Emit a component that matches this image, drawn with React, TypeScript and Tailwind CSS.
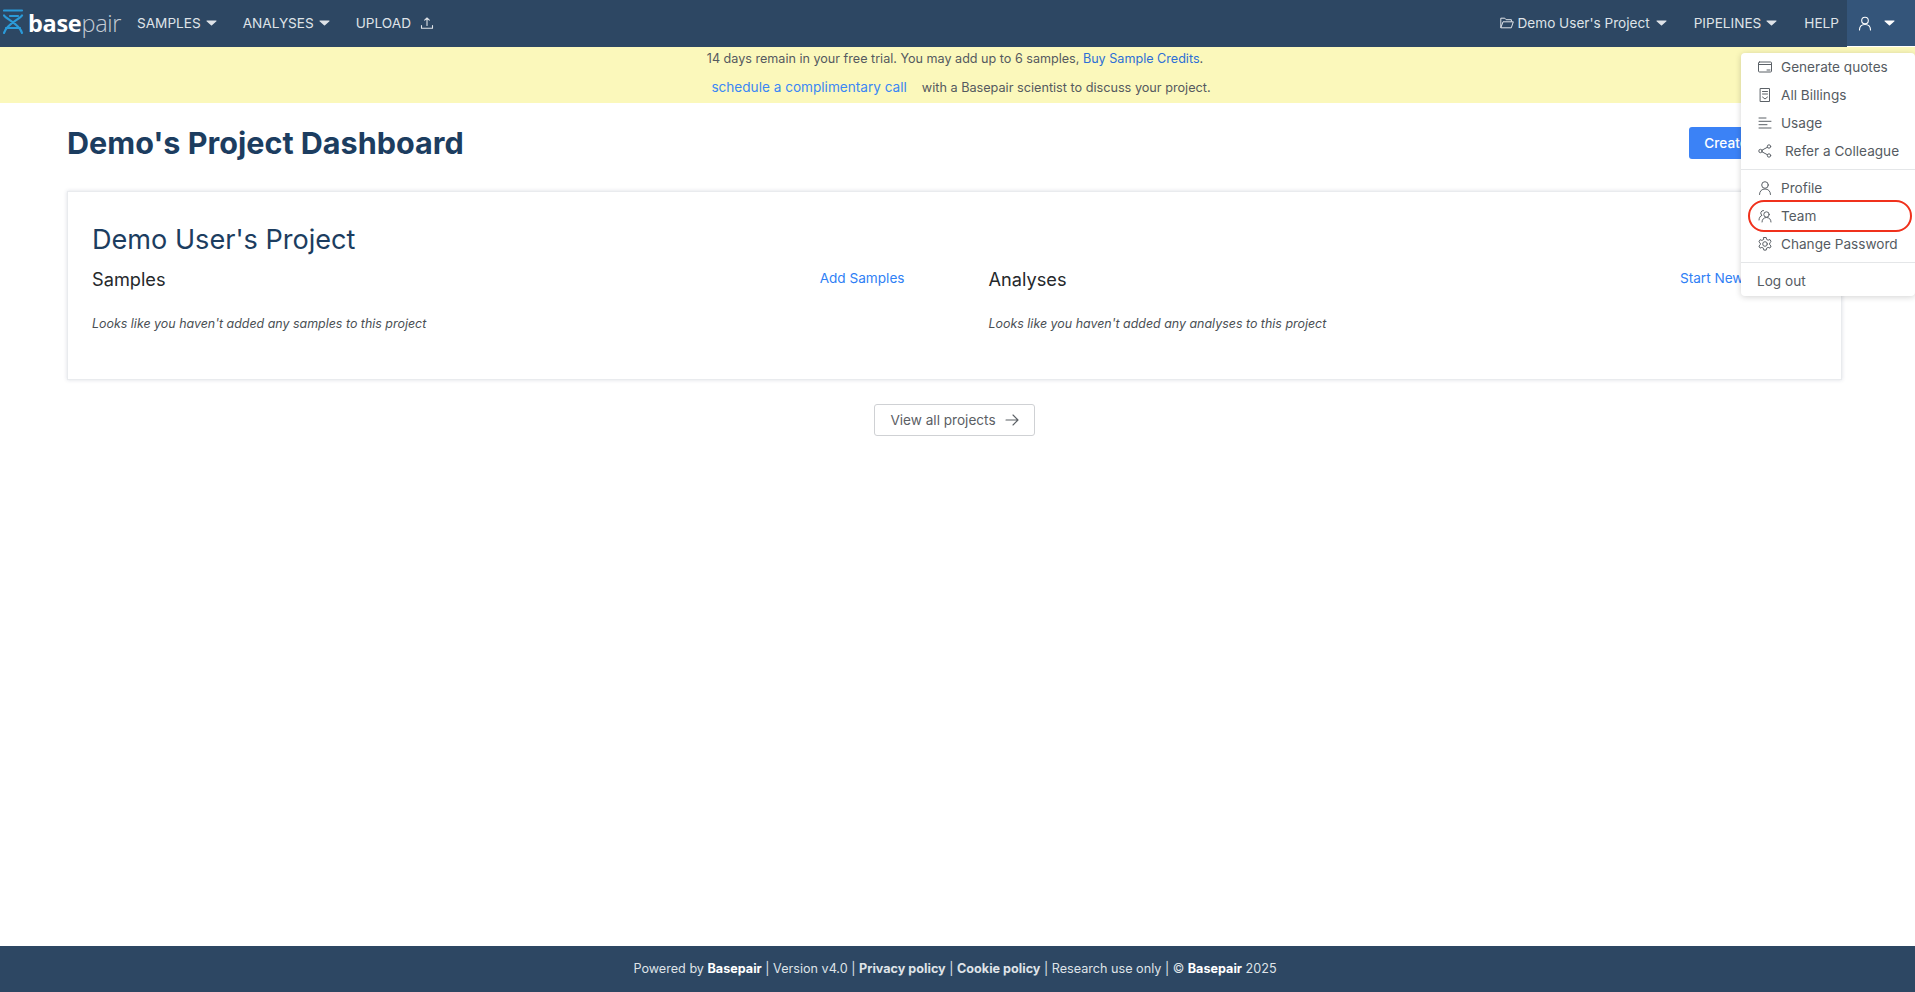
import React from "react";

const Caret = ({ className = "" }: { className?: string }) => (
  <svg width="11" height="6" viewBox="0 0 11 7" preserveAspectRatio="none" className={className} fill="currentColor"><path d="M1 .5h9a.6.6 0 0 1 .45 1L6 6.2a.7.7 0 0 1-1 0L.55 1.500A.6.6 0 0 1 1 .5z" /></svg>
);

const Stroke = ({ children, size = 16 }: { children: React.ReactNode; size?: number }) => (
  <svg width={size} height={size} viewBox="0 0 16 16" fill="none" stroke="currentColor" strokeWidth="1" strokeLinecap="round" strokeLinejoin="round" className="shrink-0">{children}</svg>
);

const Logo = () => (
  <div className="flex items-center w-[122px] h-full ml-[3px]">
    <svg width="21" height="26" viewBox="0 0 21 26" fill="none" stroke="#2b9ad8" strokeWidth="2.2" strokeLinecap="round" className="shrink-0 mt-[-3px]">
      <path d="M1 1.500h18M1 6.500C3 10 17 15 19 24M19 6.500C17 10 3 15 1 24M3 19h14M7 7h8" />
    </svg>
    <span className="ml-[4px] text-[23.500px] leading-none text-white font-['Open_Sans',sans-serif] font-bold tracking-[-0.3px]">base</span>
    <span className="text-[23.500px] leading-none text-[#c5ccd5] font-['Open_Sans',sans-serif] font-light tracking-[-0.3px]">pair</span>
  </div>
);

const NavItem = ({ label, caret = true }: { label: string; caret?: boolean }) => (
  <span className="flex items-center gap-[5px] whitespace-nowrap">
    {label}
    {caret && <Caret />}
  </span>
);

const MenuItem = ({ icon, label, gap = 8, ring = false }: { icon?: React.ReactNode; label: string; gap?: number; ring?: boolean }) => (
  <div className="relative flex items-center h-[28px] pl-[16px] text-[13.600px] text-[#555b62] whitespace-nowrap">
    {icon && <span className="flex w-[16px] justify-center text-[#5b6167]">{icon}</span>}
    <span style={{ marginLeft: icon ? gap : 0 }}>{label}</span>
    {ring && <span className="absolute left-[7px] right-[3px] top-[-2px] bottom-[-2px] rounded-full border-[2.500px] border-[#f0311c]" />}
  </div>
);

const Dropdown = () => (
  <div className="absolute right-0 top-[53px] w-[174px] rounded-[4px] bg-white pb-[1px] shadow-[0_1px_6px_rgba(0,0,0,0.18)] font-['Inter',sans-serif] z-20">
    <MenuItem label="Generate quotes" icon={<Stroke><rect x="1.500" y="3" width="13" height="10" rx="1" /><path d="M1.500 5.500h13M10 11h3" /></Stroke>} />
    <MenuItem label="All Billings" icon={<Stroke><path d="M3.500 1.500h9v13h-9zM5.500 4.500h5M5.500 7h5M5.500 10l2.500 2 2.500-2" /></Stroke>} />
    <MenuItem label="Usage" icon={<Stroke><path d="M2 3h7M2 6.300h12M2 9.700h8M2 13h12" /></Stroke>} />
    <MenuItem label="Refer a Colleague" gap={12} icon={<Stroke><circle cx="3.500" cy="8" r="1.700" /><circle cx="12" cy="3.500" r="1.700" /><circle cx="12" cy="12.500" r="1.700" /><path d="M5 7.200l5.500-3M5 8.800l5.500 3" /></Stroke>} />
    <div className="my-[4px] border-t border-[#e4e6e8]" />
    <MenuItem label="Profile" icon={<Stroke><circle cx="8" cy="5" r="3.300" /><path d="M2.500 14.500c0-3.500 2.400-5.500 5.500-5.500s5.500 2 5.500 5.500" /></Stroke>} />
    <MenuItem label="Team" ring icon={<Stroke><circle cx="9.500" cy="6.500" r="2.700" /><path d="M5 14c0-2.800 2-4.500 4.500-4.500S14 11.200 14 14M6.500 2.500A2.600 2.600 0 0 0 5 7.300C3.300 8 2 9.800 2 12" /></Stroke>} />
    <MenuItem label="Change Password" icon={<Stroke><circle cx="8" cy="8" r="2.300" /><path d="M6.800 1.500h2.400l.4 1.900 1.500.8 1.800-.7 1.200 2.100-1.400 1.300v1.800l1.400 1.300-1.200 2.100-1.800-.7-1.500.8-.4 1.900H6.800l-.4-1.900-1.500-.8-1.800.7-1.200-2.100 1.400-1.300V7.100L1.900 5.800l1.200-2.100 1.800.7 1.500-.8z" /></Stroke>} />
    <div className="my-[4px] border-t border-[#e4e6e8]" />
    <MenuItem label="Log out" />
  </div>
);

const Nav = () => (
  <nav className="relative flex h-[47px] shrink-0 items-center bg-[#2d4763] text-[13.600px] text-[#dfe3e8] z-10">
    <Logo />
    <div className="ml-[12px] flex items-center gap-[26px]">
      <NavItem label="SAMPLES" />
      <NavItem label="ANALYSES" />
      <span className="flex items-center gap-[9px]">
        UPLOAD
        <svg width="14" height="14" viewBox="0 0 14 14" fill="none" stroke="currentColor" strokeWidth="1.100" strokeLinecap="round" strokeLinejoin="round"><path d="M7 9.500V2M4.700 4.200 7 2l2.300 2.200M1.500 9.500v2.700h11V9.500" /></svg>
      </span>
    </div>
    <div className="ml-auto flex items-center h-full">
      <span className="flex items-center whitespace-nowrap">
        <svg width="14" height="12" viewBox="0 0 14 12" fill="none" stroke="currentColor" strokeWidth="1" strokeLinejoin="round" className="mr-[3px]"><path d="M.8 10.800V1.200h4l1.300 1.500h5.300v2M.8 10.800h10.500l2-6H3z" /></svg>
        Demo User's Project
        <Caret className="ml-[6px]" />
      </span>
      <span className="ml-[27px]"><NavItem label="PIPELINES" /></span>
      <span className="ml-[27px]">HELP</span>
      <div className="ml-[8px] flex h-[47px] w-[68px] items-center border-b border-white bg-[#34557a] pl-[11px] text-white">
        <svg width="14" height="15" viewBox="0 0 14 15" fill="none" stroke="currentColor" strokeWidth="1.100" strokeLinecap="round"><circle cx="7" cy="4.500" r="3.300" /><path d="M1.500 14c0-3.500 2.300-5.500 5.500-5.500s5.500 2 5.500 5.500" /></svg>
        <Caret className="ml-[12px]" />
      </div>
    </div>
    <Dropdown />
  </nav>
);

const Banner = () => (
  <div className="flex h-[56px] shrink-0 flex-col items-center bg-[#fbf8bb] text-[12.600px] leading-[20px] text-[#555a5f]">
    <p className="h-[28px] pt-[2px] pr-[5px]">
      14 days remain in your free trial. You may add up to 6 samples, <span className="text-[#2d6fd6]">Buy Sample Credits</span>.
    </p>
    <p className="pt-[2px] pl-[7px]">
      <span className="text-[13.600px] text-[#3a87f5]">schedule a complimentary call</span>
      <span className="ml-[15px] text-[12.680px]">with a Basepair scientist to discuss your project.</span>
    </p>
  </div>
);

const Column = ({ title, action, empty }: { title: string; action: string; empty: string }) => (
  <div className="min-w-0">
    <div className="flex items-center justify-between">
      <h3 className="text-[18.200px] leading-[24px] text-[#25282b]">{title}</h3>
      <a className="mb-[1px] text-[13.600px] text-[#2f80f5] whitespace-nowrap">{action}</a>
    </div>
    <p className="mt-[23px] text-[12.450px] italic leading-[20px] text-[#4a4f54]">{empty}</p>
  </div>
);

export default function App() {
  return (
    <div className="flex h-screen flex-col overflow-hidden bg-white font-['Inter',sans-serif]">
      <Nav />
      <Banner />
      <main className="flex-1 pl-[67px] pr-[73px]">
        <div className="relative mb-[10px] flex h-[78px] items-center justify-between">
          <h1 className="mt-[3px] text-[30.550px] font-bold leading-none text-[#1c3d60] whitespace-nowrap">Demo's Project Dashboard</h1>
          <button className="mr-[-3px] mt-[2px] flex h-[32px] items-center rounded-[3px] bg-[#3b82f6] px-[15px] text-[13.600px] font-medium text-white whitespace-nowrap">Create New Project</button>
        </div>
        <section className="h-[189px] border border-[#e9ebee] pl-[24px] pr-[40px] pt-[29px] shadow-[0_0_4px_rgba(30,50,90,0.16)]">
          <h2 className="text-[27.100px] leading-[38px] text-[#1c3d60]">Demo User's Project</h2>
          <div className="mt-[8px] grid grid-cols-2 gap-[84px]">
            <Column title="Samples" action="Add Samples" empty="Looks like you haven't added any samples to this project" />
            <Column title="Analyses" action="Start New Analysis" empty="Looks like you haven't added any analyses to this project" />
          </div>
        </section>
        <div className="mt-[24px] flex justify-center">
          <button className="flex h-[32px] items-center gap-[9px] rounded-[3px] border border-[#cfd1d4] px-[15px] text-[13.600px] text-[#5b6065]">
            View all projects
            <svg width="14" height="12" viewBox="0 0 14 12" fill="none" stroke="currentColor" strokeWidth="1.100" strokeLinecap="round" strokeLinejoin="round"><path d="M1 6h12M8 1l5 5-5 5" /></svg>
          </button>
        </div>
      </main>
      <footer className="flex h-[46px] shrink-0 items-center justify-center bg-[#2d4763] pr-[5px] text-[12.640px] text-[#dfe3e8] whitespace-pre">
        Powered by <b className="text-white">Basepair</b> | Version v4.0 | <b>Privacy policy</b> | <b>Cookie policy</b> | Research use only | © <b className="text-white">Basepair</b> 2025
      </footer>
    </div>
  );
}
